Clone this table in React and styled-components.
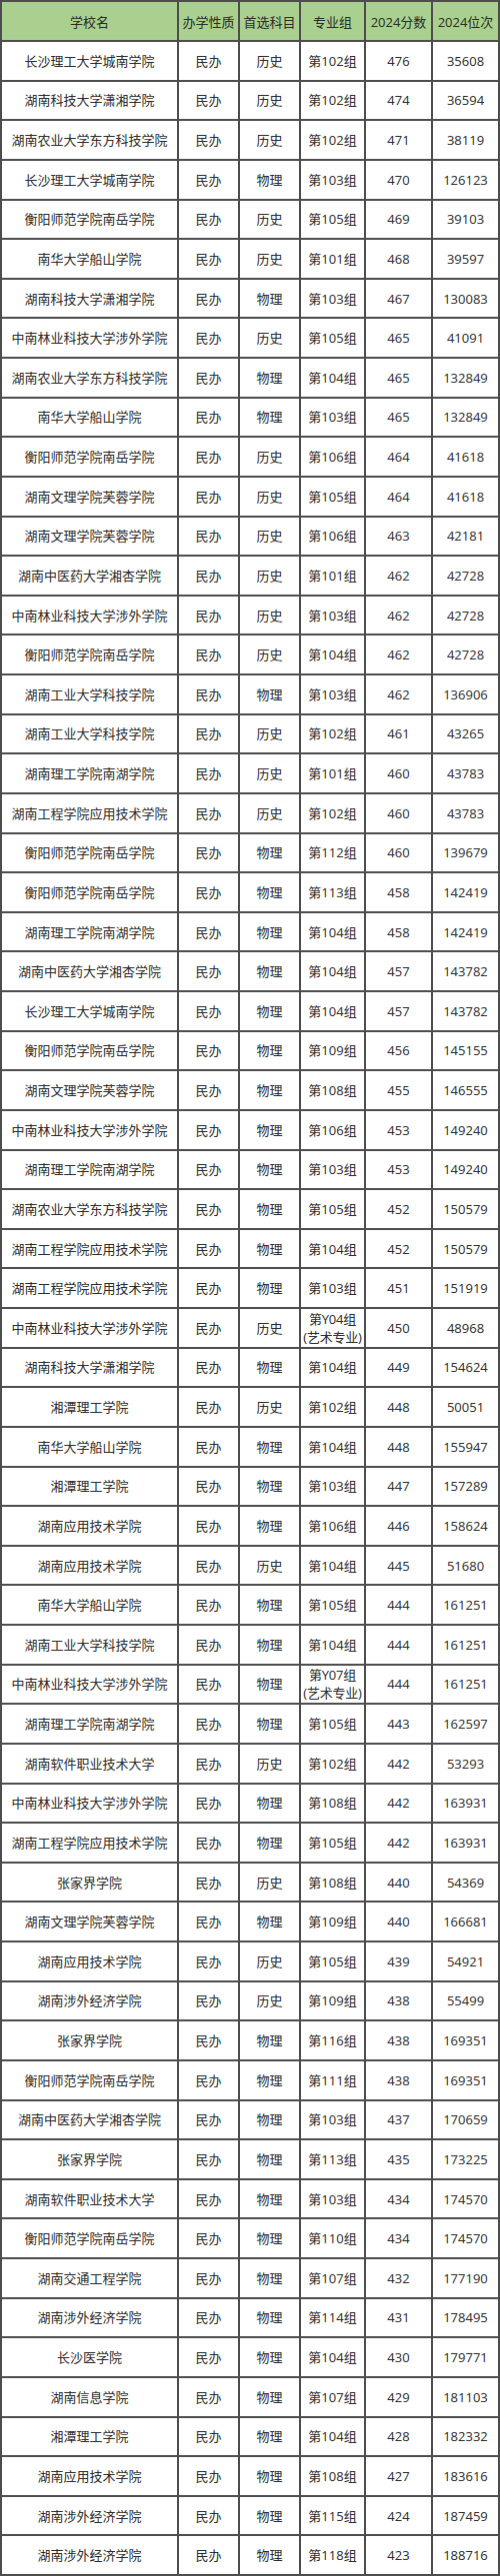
import React from 'react'
import styled, { createGlobalStyle } from 'styled-components'

const GlobalStyle = createGlobalStyle`
    html, body {
        margin: 0;
        padding: 0;
        background: #ffffff;
    }
    body {
        font-family: "Open Sans", "Noto Sans CJK SC", sans-serif;
    }
`

// the grid lines are the sheet's own background showing through 2px gaps
const Sheet = styled.div`
    width: 500px;
    box-sizing: border-box;
    display: grid;
    grid-template-columns: 175px 59px 59px 63px 65px 65px;
    grid-template-rows: 38px;
    grid-auto-rows: 37.625px;
    gap: 2px;
    padding: 2px;
    background: #4d4d4d;
    font-size: 13px;
    color: #2b2b2b;
`

const HeadCell = styled.div`
    display: flex;
    align-items: center;
    justify-content: center;
    background: #a9d08e;
    white-space: nowrap;
`

const Cell = styled.div`
    display: flex;
    align-items: center;
    justify-content: center;
    background: #ffffff;
    text-align: center;
    white-space: pre;
    line-height: 18px;
    letter-spacing: ${props => props.twoLine ? '-0.2px' : '0'};
`

const columns = ['学校名', '办学性质', '首选科目', '专业组', '2024分数', '2024位次']

const rows = [
    ['长沙理工大学城南学院', '历史', '第102组', 476, 35608],
    ['湖南科技大学潇湘学院', '历史', '第102组', 474, 36594],
    ['湖南农业大学东方科技学院', '历史', '第102组', 471, 38119],
    ['长沙理工大学城南学院', '物理', '第103组', 470, 126123],
    ['衡阳师范学院南岳学院', '历史', '第105组', 469, 39103],
    ['南华大学船山学院', '历史', '第101组', 468, 39597],
    ['湖南科技大学潇湘学院', '物理', '第103组', 467, 130083],
    ['中南林业科技大学涉外学院', '历史', '第105组', 465, 41091],
    ['湖南农业大学东方科技学院', '物理', '第104组', 465, 132849],
    ['南华大学船山学院', '物理', '第103组', 465, 132849],
    ['衡阳师范学院南岳学院', '历史', '第106组', 464, 41618],
    ['湖南文理学院芙蓉学院', '历史', '第105组', 464, 41618],
    ['湖南文理学院芙蓉学院', '历史', '第106组', 463, 42181],
    ['湖南中医药大学湘杏学院', '历史', '第101组', 462, 42728],
    ['中南林业科技大学涉外学院', '历史', '第103组', 462, 42728],
    ['衡阳师范学院南岳学院', '历史', '第104组', 462, 42728],
    ['湖南工业大学科技学院', '物理', '第103组', 462, 136906],
    ['湖南工业大学科技学院', '历史', '第102组', 461, 43265],
    ['湖南理工学院南湖学院', '历史', '第101组', 460, 43783],
    ['湖南工程学院应用技术学院', '历史', '第102组', 460, 43783],
    ['衡阳师范学院南岳学院', '物理', '第112组', 460, 139679],
    ['衡阳师范学院南岳学院', '物理', '第113组', 458, 142419],
    ['湖南理工学院南湖学院', '物理', '第104组', 458, 142419],
    ['湖南中医药大学湘杏学院', '物理', '第104组', 457, 143782],
    ['长沙理工大学城南学院', '物理', '第104组', 457, 143782],
    ['衡阳师范学院南岳学院', '物理', '第109组', 456, 145155],
    ['湖南文理学院芙蓉学院', '物理', '第108组', 455, 146555],
    ['中南林业科技大学涉外学院', '物理', '第106组', 453, 149240],
    ['湖南理工学院南湖学院', '物理', '第103组', 453, 149240],
    ['湖南农业大学东方科技学院', '物理', '第105组', 452, 150579],
    ['湖南工程学院应用技术学院', '物理', '第104组', 452, 150579],
    ['湖南工程学院应用技术学院', '物理', '第103组', 451, 151919],
    ['中南林业科技大学涉外学院', '历史', '第Y04组\n(艺术专业)', 450, 48968],
    ['湖南科技大学潇湘学院', '物理', '第104组', 449, 154624],
    ['湘潭理工学院', '历史', '第102组', 448, 50051],
    ['南华大学船山学院', '物理', '第104组', 448, 155947],
    ['湘潭理工学院', '物理', '第103组', 447, 157289],
    ['湖南应用技术学院', '物理', '第106组', 446, 158624],
    ['湖南应用技术学院', '历史', '第104组', 445, 51680],
    ['南华大学船山学院', '物理', '第105组', 444, 161251],
    ['湖南工业大学科技学院', '物理', '第104组', 444, 161251],
    ['中南林业科技大学涉外学院', '物理', '第Y07组\n(艺术专业)', 444, 161251],
    ['湖南理工学院南湖学院', '物理', '第105组', 443, 162597],
    ['湖南软件职业技术大学', '历史', '第102组', 442, 53293],
    ['中南林业科技大学涉外学院', '物理', '第108组', 442, 163931],
    ['湖南工程学院应用技术学院', '物理', '第105组', 442, 163931],
    ['张家界学院', '历史', '第108组', 440, 54369],
    ['湖南文理学院芙蓉学院', '物理', '第109组', 440, 166681],
    ['湖南应用技术学院', '历史', '第105组', 439, 54921],
    ['湖南涉外经济学院', '历史', '第109组', 438, 55499],
    ['张家界学院', '物理', '第116组', 438, 169351],
    ['衡阳师范学院南岳学院', '物理', '第111组', 438, 169351],
    ['湖南中医药大学湘杏学院', '物理', '第103组', 437, 170659],
    ['张家界学院', '物理', '第113组', 435, 173225],
    ['湖南软件职业技术大学', '物理', '第103组', 434, 174570],
    ['衡阳师范学院南岳学院', '物理', '第110组', 434, 174570],
    ['湖南交通工程学院', '物理', '第107组', 432, 177190],
    ['湖南涉外经济学院', '物理', '第114组', 431, 178495],
    ['长沙医学院', '物理', '第104组', 430, 179771],
    ['湖南信息学院', '物理', '第107组', 429, 181103],
    ['湘潭理工学院', '物理', '第104组', 428, 182332],
    ['湖南应用技术学院', '物理', '第108组', 427, 183616],
    ['湖南涉外经济学院', '物理', '第115组', 424, 187459],
    ['湖南涉外经济学院', '物理', '第118组', 423, 188716],
]

const App = () => {
    return (
        <>
            <GlobalStyle/>
            <Sheet>
                {columns.map(title => <HeadCell key={title}>{title}</HeadCell>)}
                {rows.map(([school, subject, group, score, rank], i) => (
                    <React.Fragment key={i}>
                        <Cell>{school}</Cell>
                        <Cell>民办</Cell>
                        <Cell>{subject}</Cell>
                        <Cell twoLine={group.includes('\n')}>{group}</Cell>
                        <Cell>{score}</Cell>
                        <Cell>{rank}</Cell>
                    </React.Fragment>
                ))}
            </Sheet>
        </>
    )
}

export default App
